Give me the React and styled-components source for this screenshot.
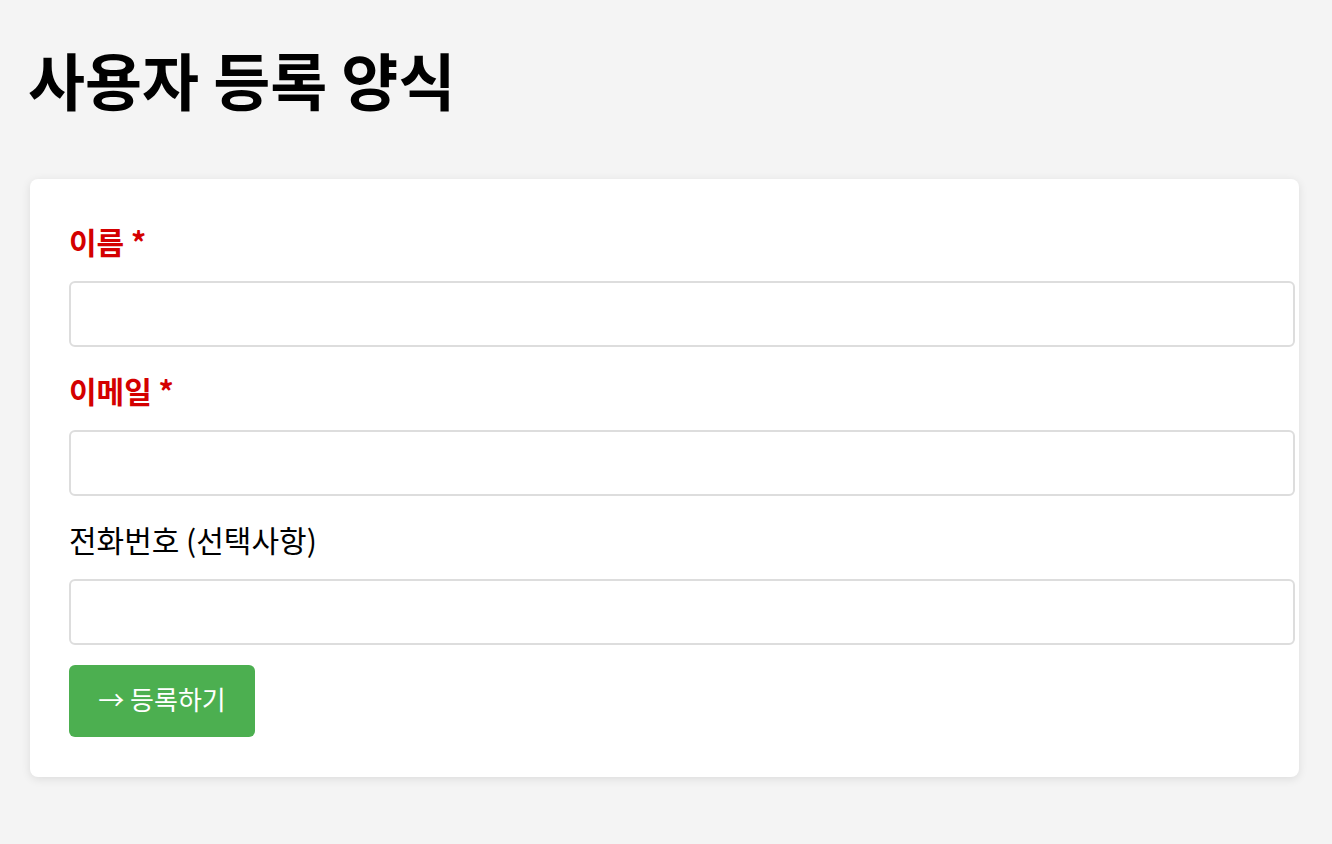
import React from "react";
import styled, { createGlobalStyle } from "styled-components";

const GlobalStyle = createGlobalStyle`
  body {
    margin: 0;
    background: #f4f4f4;
    font-family: "Noto Sans CJK KR", "Noto Sans", sans-serif;
  }
`;

const Page = styled.div`
  padding: 30px 33px 30px 28px;
`;

const Title = styled.h1`
  margin: 9px 0 60px;
  font-size: 62px;
  line-height: 80px;
  font-weight: 700;
  color: #000;
`;

const Card = styled.form`
  margin-left: 2px;
  background: #fff;
  border-radius: 8px;
  box-shadow: 0 2px 10px rgba(0, 0, 0, 0.1);
  padding: 42px 40px 40px 39px;
`;

const Field = styled.div`
  margin-bottom: 23px;

  &:last-of-type {
    margin-bottom: 20px;
  }
`;

const Label = styled.label`
  display: block;
  font-size: 30px;
  line-height: 40px;
  margin-bottom: 20px;
  font-weight: ${(p) => (p.$required ? 700 : 400)};
  color: ${(p) => (p.$required ? "#d40000" : "#000")};
`;

const Input = styled.input`
  display: block;
  width: 100%;
  height: 62px;
  padding: 0 16px;
  margin: 0;
  border: 2px solid #ddd;
  border-radius: 6px;
  font-size: 20px;
  font-family: inherit;
  background: #fff;
  outline: none;
`;

const Button = styled.button`
  display: block;
  width: 186px;
  height: 72px;
  padding: 0 0 5px;
  border: none;
  border-radius: 6px;
  background: #4caf50;
  color: #fff;
  font-family: inherit;
  font-size: 26px;
  cursor: pointer;
`;

const fields = [
  { id: "name", label: "이름 *", required: true, type: "text" },
  { id: "email", label: "이메일 *", required: true, type: "email" },
  { id: "phone", label: "전화번호 (선택사항)", required: false, type: "tel" },
];

export default function App() {
  return (
    <>
      <GlobalStyle />
      <Page>
        <Title>사용자 등록 양식</Title>
        <Card onSubmit={(e) => e.preventDefault()}>
          {fields.map((f) => (
            <Field key={f.id}>
              <Label htmlFor={f.id} $required={f.required}>
                {f.label}
              </Label>
              <Input id={f.id} type={f.type} />
            </Field>
          ))}
          <Button type="submit">→ 등록하기</Button>
        </Card>
      </Page>
    </>
  );
}
